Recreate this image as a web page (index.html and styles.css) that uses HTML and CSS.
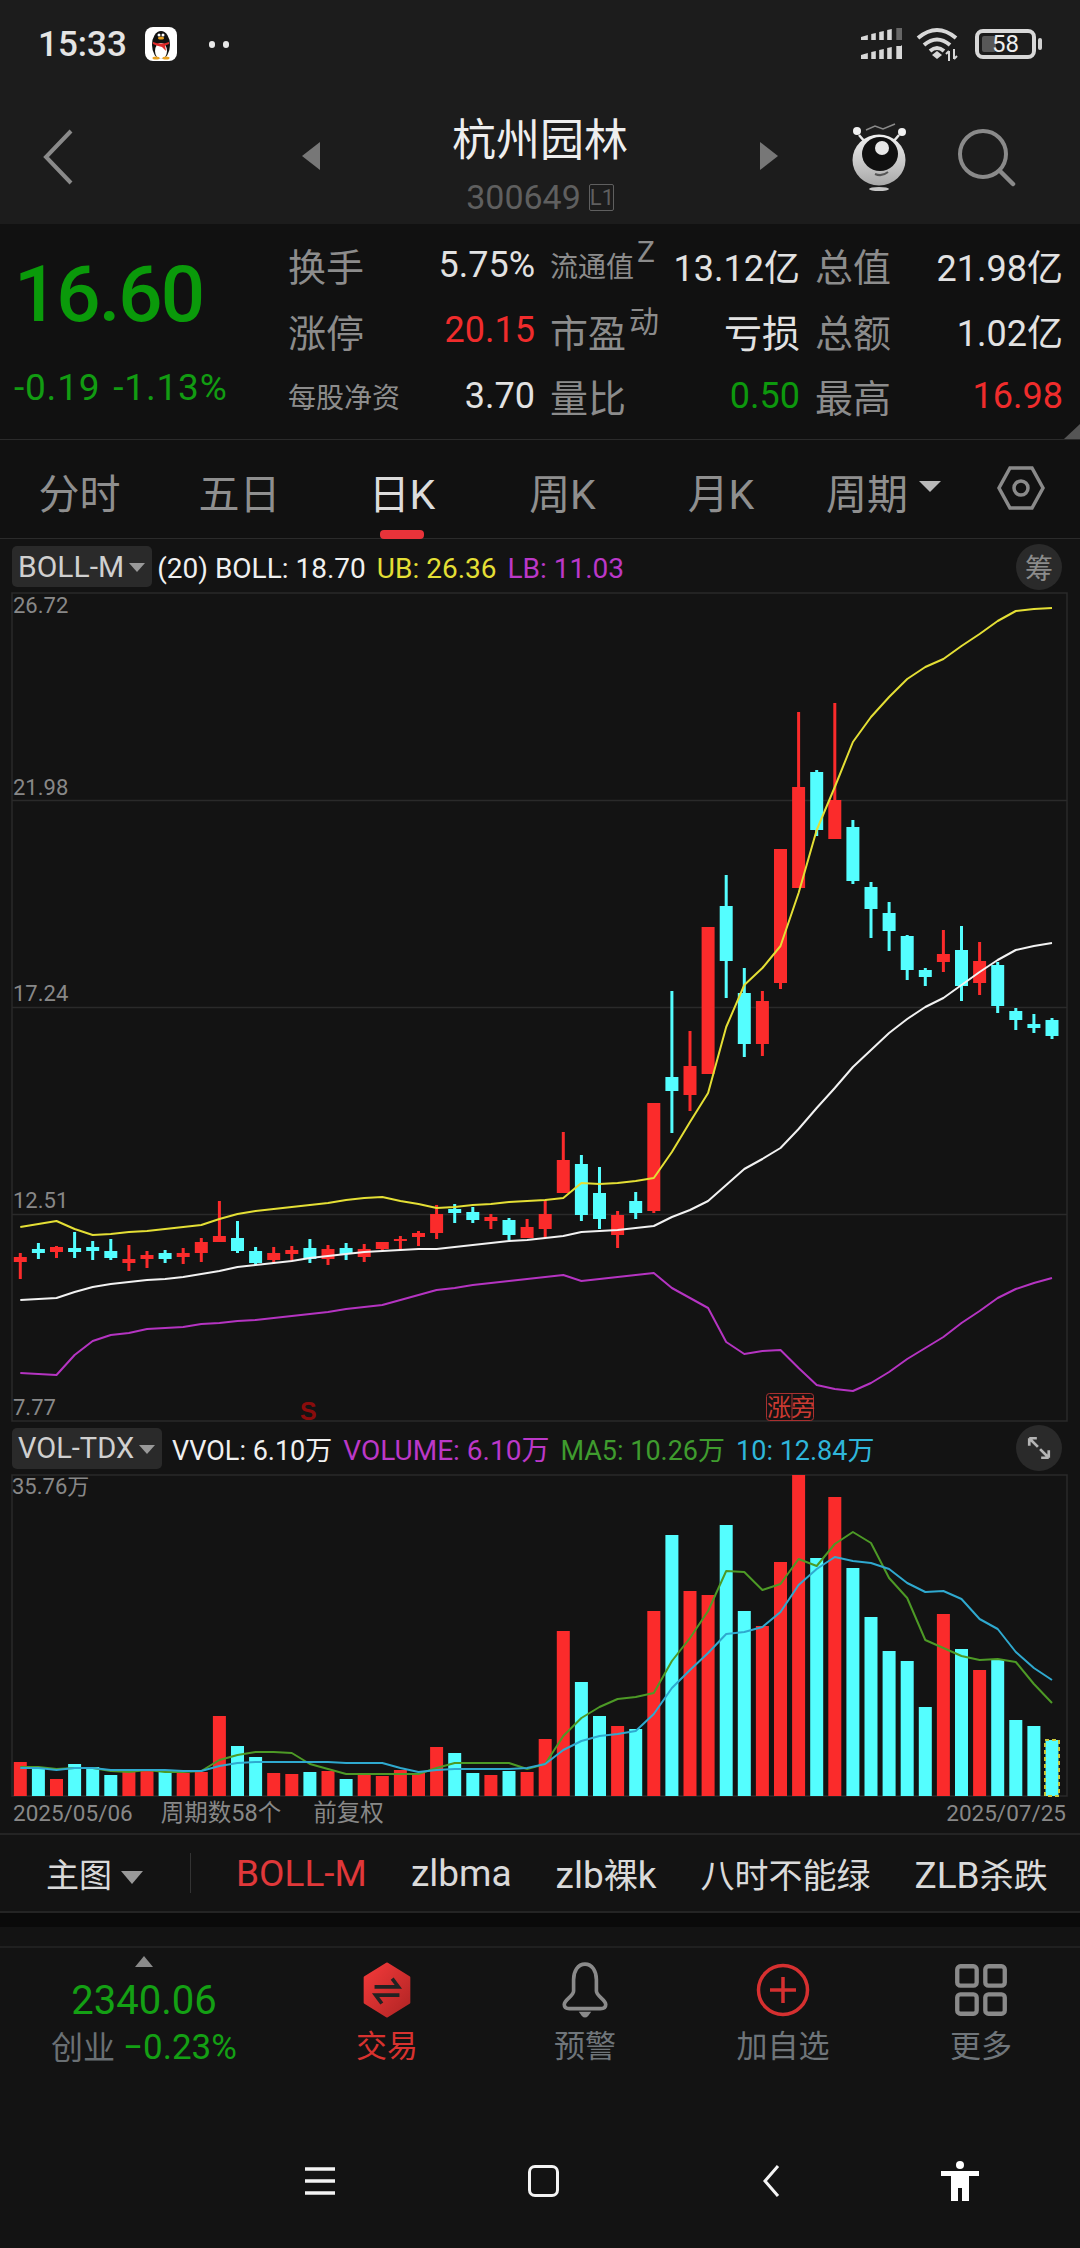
FILE: index.html
```html
<!DOCTYPE html>
<html>
<head>
  <meta charset="utf-8">
  <title>杭州园林</title>
  <link rel="stylesheet" href="styles.css">
</head>

<body>
  <div class="status-bar">
    <span class="clock">15:33</span>
    <svg class="qq-icon" viewBox="0 0 32 34">
      <rect width="32" height="34" rx="8" fill="#fff"/>
      <ellipse cx="16" cy="18" rx="9" ry="14" fill="#111"/>
      <ellipse cx="16" cy="24" rx="6" ry="8" fill="#fff"/>
      <ellipse cx="16" cy="11" rx="3" ry="1.6" fill="#e8a020"/>
      <path d="M8 15 Q16 18 24 15 V17 L20 18.500 L21 24 L17 20 Q12 19 8 17Z" fill="#e02a2a"/>
      <circle cx="14" cy="8" r="1.500" fill="#fff"/>
      <circle cx="18" cy="8" r="1.500" fill="#fff"/>
      <ellipse cx="11" cy="31" rx="3.500" ry="1.500" fill="#e8a020"/>
      <ellipse cx="21" cy="31" rx="3.500" ry="1.500" fill="#e8a020"/>
    </svg>
    <span class="dots"><i></i><i></i></span>
    <div class="status-right">
      <svg class="signal" viewBox="0 0 36 32" preserveAspectRatio="none">
        <g fill="#d8d8d8">
          <path d="M0 9 L6 7 V12 H0Z M9 6 L13 5 V12 H9Z M16 4 L20 3 V12 H16Z M23 2 L27 1 V12 H23Z"/>
          <path d="M0 27 L6 25 V31 H0Z M9 24 L13 23 V31 H9Z M16 22 L20 21 V31 H16Z M23 20 L27 19 V31 H23Z M31 18 H35 L36 17 V31 H31Z"/>
        </g>
        <rect x="31" y="0" width="5" height="12" fill="#666"/>
      </svg>
      <svg class="wifi" viewBox="0 0 46 34">
        <g fill="none" stroke="#d8d8d8" stroke-width="4">
          <path d="M2 11 Q21 -5 40 11"/>
          <path d="M8 18 Q21 7 34 18"/>
          <path d="M14 24 Q21 18 28 24"/>
        </g>
        <path d="M16 28 L21 24 L26 28 L21 32Z" fill="#d8d8d8"/>
        <path d="M33 34 V24 M30 27 L33 24 M38 22 V32 M38 32 L41 29" stroke="#d8d8d8" stroke-width="2" fill="none"/>
      </svg>
      <div class="battery">
        <span class="battery-fill"></span>
        <span class="battery-num">58</span>
      </div>
      <span class="battery-tip"></span>
    </div>
  </div>

  <header class="top-bar">
    <svg class="back-icon" viewBox="0 0 30 56">
      <path d="M28 2 L3 28 L28 54" fill="none" stroke="#8a8a8a" stroke-width="4"/>
    </svg>
    <span class="tri-left"></span>
    <div class="stock-name">
      <div class="stock-title">杭州园林</div>
      <div class="stock-code">300649<span class="level-tag">L1</span></div>
    </div>
    <span class="tri-right"></span>
    <svg class="mascot" viewBox="0 0 58 72">
      <defs>
        <linearGradient id="mascotFill" x1="0" y1="0" x2="0" y2="1">
          <stop offset="0" stop-color="#f0f0f0"/>
          <stop offset="1" stop-color="#a8a8a8"/>
        </linearGradient>
      </defs>
      <path d="M9 16 L15 23 M49 16 L43 23" stroke="#e8e8e8" stroke-width="2.500"/>
      <circle cx="7" cy="12" r="4" fill="#f0f0f0"/>
      <circle cx="52" cy="13" r="4" fill="#f0f0f0"/>
      <path d="M16 11 L25 7 L33 10 L45 5" stroke="#8a8a8a" stroke-width="1.500" fill="none"/>
      <ellipse cx="29" cy="41" rx="26.500" ry="25.500" fill="url(#mascotFill)"/>
      <ellipse cx="30" cy="35" rx="18" ry="17" fill="#101010"/>
      <circle cx="32" cy="29" r="7" fill="#e8e8e8"/>
      <path d="M25 55 Q32 58 38 53" stroke="#555" stroke-width="2" fill="none"/>
      <ellipse cx="29" cy="70" rx="10" ry="2" fill="#c4c4c4"/>
    </svg>
    <svg class="search-icon" viewBox="0 0 58 58">
      <circle cx="25" cy="25" r="23" fill="none" stroke="#8a8a8a" stroke-width="4"/>
      <path d="M42 42 L55 55" stroke="#8a8a8a" stroke-width="4.500" stroke-linecap="round"/>
    </svg>
  </header>

  <section class="quote">
    <div class="quote-main">
      <div class="price">16.60</div>
      <div class="change">-0.19 -1.13%</div>
    </div>
    <div class="quote-grid">
      <div class="cell"><span class="lbl">换手</span><span class="val">5.75%</span></div>
      <div class="cell"><span class="lbl small">流通值<sup class="sup">Z</sup></span><span class="val">13.12亿</span></div>
      <div class="cell"><span class="lbl">总值</span><span class="val">21.98亿</span></div>
      <div class="cell"><span class="lbl">涨停</span><span class="val red">20.15</span></div>
      <div class="cell"><span class="lbl">市盈<sup class="sup">动</sup></span><span class="val cn">亏损</span></div>
      <div class="cell"><span class="lbl">总额</span><span class="val">1.02亿</span></div>
      <div class="cell"><span class="lbl small">每股净资</span><span class="val">3.70</span></div>
      <div class="cell"><span class="lbl">量比</span><span class="val green">0.50</span></div>
      <div class="cell"><span class="lbl">最高</span><span class="val red">16.98</span></div>
    </div>
    <span class="corner"></span>
  </section>

  <nav class="period-tabs">
    <span class="tab">分时</span>
    <span class="tab">五日</span>
    <span class="tab active">日K</span>
    <span class="tab">周K</span>
    <span class="tab">月K</span>
    <span class="tab">周期<i class="caret"></i></span>
    <svg class="hex-icon" viewBox="0 0 48 44">
      <path d="M13 2 H35 L46 22 L35 42 H13 L2 22Z" fill="none" stroke="#8a8a8a" stroke-width="3.500"/>
      <circle cx="24" cy="22" r="7" fill="none" stroke="#8a8a8a" stroke-width="3.500"/>
    </svg>
  </nav>

  <div class="legend">
    <span class="chip">BOLL-M<i class="chip-caret"></i></span>
    <span class="leg white">(20) BOLL: 18.70</span>
    <span class="leg yellow">UB: 26.36</span>
    <span class="leg purple">LB: 11.03</span>
    <span class="round-btn">筹</span>
  </div>

  <svg id="kline" class="chart kline-chart" viewBox="0 592 1080 830">
    <g class="grid">
      <rect x="12" y="593" width="1055" height="828"/>
      <path d="M12 800.500 H1067 M12 1007.500 H1067 M12 1214.500 H1067"/>
    </g>
    <text class="axis" x="13" y="613">26.72</text>
    <text class="axis" x="13" y="795">21.98</text>
    <text class="axis" x="13" y="1001">17.24</text>
    <text class="axis" x="13" y="1208">12.51</text>
    <text class="axis" x="13" y="1415">7.77</text>
    <text class="mark-s" x="300" y="1420">S</text>
    <g id="candles"></g>
    <g id="bollLines"></g>
    <rect class="tag-box" x="766.500" y="1393.500" width="47" height="27" rx="3"/>
    <path class="tag-box" d="M792 1393.500 V1420.500"/>
    <text class="tag-text" x="767" y="1416">涨</text>
    <text class="tag-text" x="791" y="1416">旁</text>
  </svg>

  <div class="legend legend-vol">
    <span class="chip">VOL-TDX<i class="chip-caret"></i></span>
    <span class="leg white">VVOL: 6.10万</span>
    <span class="leg purple">VOLUME: 6.10万</span>
    <span class="leg ma5">MA5: 10.26万</span>
    <span class="leg ma10">10: 12.84万</span>
    <span class="round-btn">
      <svg class="expand-icon" viewBox="0 0 24 24">
        <path d="M3 3 L11 11 M3 3 H10 M3 3 V10 M21 21 L13 13 M21 21 H14 M21 21 V14" fill="none" stroke="#b4b4b4" stroke-width="2.500"/>
      </svg>
    </span>
  </div>

  <svg id="volume" class="chart vol-chart" viewBox="0 1473 1080 323">
    <g class="grid">
      <rect x="12" y="1474" width="1055" height="321"/>
    </g>
    <text class="axis" x="12" y="1493">35.76万</text>
    <g id="volBars"></g>
    <g id="volLines"></g>
  </svg>

  <div class="date-row">
    <span>2025/05/06</span>
    <span class="date-cn">周期数58个</span>
    <span class="date-cn date-adj">前复权</span>
    <span class="date-last">2025/07/25</span>
  </div>

  <div class="indicator-row">
    <span class="main-pick">主图<i class="pick-caret"></i></span>
    <span class="divider"></span>
    <span class="ind active"><span class="lat">BOLL-M</span></span>
    <span class="ind"><span class="lat">zlbma</span></span>
    <span class="ind"><span class="lat">zlb</span>裸<span class="lat">k</span></span>
    <span class="ind">八时不能绿</span>
    <span class="ind"><span class="lat">ZLB</span>杀跌</span>
  </div>

  <div class="dark-strip"></div>
  <div class="pad-strip"></div>

  <nav class="bottom-nav">
    <div class="index-box">
      <span class="index-up"></span>
      <span class="index-num">2340.06</span>
      <span class="index-line">创业 <b>−0.23%</b></span>
    </div>
    <div class="nav-item on">
      <svg class="nav-icon" viewBox="0 0 50 54">
        <defs>
          <linearGradient id="hexFill" x1="0" y1="0" x2="1" y2="1">
            <stop offset="0" stop-color="#f43a3a"/>
            <stop offset="1" stop-color="#b02424"/>
          </linearGradient>
        </defs>
        <path d="M25 2 L46 15 V39 L25 52 L4 39 V15Z" fill="url(#hexFill)" stroke="url(#hexFill)" stroke-width="3" stroke-linejoin="round"/>
        <path d="M13 24 H36 L30 16 M37 32 H14 L20 40" fill="none" stroke="#222" stroke-width="3.500"/>
      </svg>
      <span>交易</span>
    </div>
    <div class="nav-item">
      <svg class="nav-icon" viewBox="0 0 50 54">
        <path d="M25 2 C18 2 14 9 14 17 V28 C14 33 5 36 5 41 C5 44 7 45 10 45 H40 C43 45 45 44 45 41 C45 36 36 33 36 28 V17 C36 9 32 2 25 2Z" fill="none" stroke="#8a8a8a" stroke-width="3.500"/>
        <path d="M19 48 H31 L28 52 Q25 55 22 52Z" fill="#8a8a8a"/>
      </svg>
      <span>预警</span>
    </div>
    <div class="nav-item">
      <svg class="nav-icon" viewBox="0 0 54 54">
        <circle cx="27" cy="27" r="24.500" fill="none" stroke="#d63030" stroke-width="3.500"/>
        <path d="M27 14 V40 M14 27 H40" stroke="#d63030" stroke-width="3.500"/>
      </svg>
      <span>加自选</span>
    </div>
    <div class="nav-item">
      <svg class="nav-icon" viewBox="0 0 50 50">
        <g fill="none" stroke="#8a8a8a" stroke-width="4">
          <rect x="3" y="3" width="18" height="18" rx="3"/>
          <rect x="29" y="3" width="18" height="18" rx="3"/>
          <rect x="3" y="29" width="18" height="18" rx="3"/>
          <rect x="29" y="29" width="18" height="18" rx="3"/>
        </g>
      </svg>
      <span>更多</span>
    </div>
  </nav>

  <div class="system-nav">
    <svg class="sys-menu" viewBox="0 0 30 28">
      <path d="M0 2 H30 M0 14 H30 M0 26 H30" stroke="#f4f4f4" stroke-width="3.500"/>
    </svg>
    <span class="sys-home"></span>
    <svg class="sys-back" viewBox="0 0 18 32">
      <path d="M16 1 L3 16 L16 31" fill="none" stroke="#f4f4f4" stroke-width="3"/>
    </svg>
    <svg class="sys-person" viewBox="0 0 38 40">
      <circle cx="19" cy="4" r="4" fill="#fff"/>
      <path d="M0 10 H38 V15 H28 V40 H21 V27 H17 V40 H10 V15 H0Z" fill="#fff"/>
    </svg>
  </div>

  <script src="chart.js"></script>
</body>

</html>
```

FILE: styles.css
```css
body {
  margin: 0;
  width: 1080px;
  height: 2248px;
  overflow: hidden;
  background: #131313;
  font-family: Roboto, "Noto Sans CJK SC", sans-serif;
  color: #ddd;
}

i {
  display: block;
}

/* status bar */
.status-bar {
  display: flex;
  align-items: center;
  height: 72px;
  padding: 16px 0 0 38px;
  box-sizing: border-box;
  background: #1c1c1c;
}

.clock {
  font-size: 35px;
  font-weight: 500;
  color: #e4e4e4;
  width: 107px;
}

.qq-icon {
  width: 32px;
  height: 34px;
}

.dots {
  display: flex;
  gap: 8px;
  margin-left: 32px;
}

.dots i {
  width: 6px;
  height: 7px;
  border-radius: 3px;
  background: #e8e8e8;
}

.status-right {
  display: flex;
  align-items: center;
  margin-left: auto;
  padding-right: 38px;
}

.signal {
  width: 41px;
  height: 32px;
  margin-right: 14px;
}

.wifi {
  width: 46px;
  height: 34px;
  margin-right: 13px;
}

.battery {
  display: flex;
  align-items: center;
  justify-content: center;
  position: relative;
  width: 61px;
  height: 30px;
  box-sizing: border-box;
  border: 4px solid #d8d8d8;
  border-radius: 8px;
}

.battery-fill {
  position: absolute;
  left: 3px;
  top: 3px;
  bottom: 3px;
  width: 14px;
  border-radius: 2px;
  background: #585858;
}

.battery-num {
  position: relative;
  font-size: 24px;
  color: #eee;
}

.battery-tip {
  width: 4px;
  height: 12px;
  margin-left: 2px;
  border-radius: 2px;
  background: #d0d0d0;
}

/* title bar */
.top-bar {
  display: grid;
  grid-template-columns: 302px 18px 440px 18px 72px 58px 50px 58px 64px;
  align-items: start;
  height: 152px;
  background: #1c1c1c;
}

.back-icon {
  width: 30px;
  height: 56px;
  margin: 57px 0 0 43px;
}

.tri-left, .tri-right {
  width: 0;
  height: 0;
  margin-top: 70px;
  border-top: 14px solid transparent;
  border-bottom: 14px solid transparent;
}

.tri-left {
  border-right: 18px solid #777;
}

.tri-right {
  border-left: 18px solid #777;
}

.stock-name {
  display: flex;
  flex-direction: column;
  align-items: center;
  padding-top: 43px;
}

.stock-title {
  font-size: 44px;
  line-height: 52px;
  color: #eee;
}

.stock-code {
  display: flex;
  align-items: center;
  margin-top: 14px;
  height: 32px;
  font-size: 34px;
  color: #5f5f5f;
}

.level-tag {
  width: 25px;
  height: 27px;
  margin-left: 8px;
  box-sizing: border-box;
  border: 1px solid #5f5f5f;
  border-radius: 2px;
  font-size: 22px;
  line-height: 25px;
  text-align: center;
}

.mascot {
  grid-column: 6;
  width: 58px;
  height: 72px;
  margin-top: 47px;
}

.search-icon {
  grid-column: 8;
  width: 58px;
  height: 58px;
  margin-top: 57px;
}

/* quote block */
.quote {
  display: flex;
  position: relative;
  height: 216px;
  box-sizing: border-box;
  background: #111;
  border-bottom: 1px solid #2b2b2b;
}

.quote-main {
  width: 288px;
  padding: 26px 0 0 14px;
  box-sizing: border-box;
}

.price {
  font-size: 78px;
  line-height: 90px;
  font-weight: 500;
  letter-spacing: -2px;
  color: #0a9a0a;
}

.change {
  margin-top: 28px;
  font-size: 37px;
  line-height: 40px;
  letter-spacing: 0.800px;
  word-spacing: 3px;
  color: #129c12;
  white-space: nowrap;
}

.quote-grid {
  display: grid;
  grid-template-columns: 247px 250px 248px;
  grid-auto-rows: 65.5px;
  column-gap: 15px;
  padding-top: 8px;
}

.cell {
  display: flex;
  justify-content: space-between;
  align-items: center;
}

.lbl {
  font-size: 38px;
  color: #8c8c8c;
  white-space: nowrap;
}

.lbl.small {
  font-size: 28px;
}

.sup {
  margin-left: 3px;
  font-size: 30px;
  line-height: 0;
  vertical-align: 15px;
}

.val {
  font-size: 36px;
  color: #e2e2e2;
}

.val.cn {
  font-size: 38px;
}

.red {
  color: #f02c2c;
}

.green {
  color: #0d980d;
}

.corner {
  position: absolute;
  right: 0;
  bottom: 0;
  width: 0;
  height: 0;
  border-left: 16px solid transparent;
  border-bottom: 15px solid #555;
}

/* period tabs */
.period-tabs {
  display: grid;
  grid-template-columns: 159px 161px 164px 157px 160px 165px 1fr;
  align-items: center;
  height: 99px;
  box-sizing: border-box;
  border-bottom: 1px solid #2b2b2b;
  padding-top: 3px;
  background: #111;
}

.tab {
  display: flex;
  justify-content: center;
  align-items: center;
  position: relative;
  font-size: 41px;
  color: #8f8f8f;
}

.tab.active {
  color: #dcdcdc;
}

.tab.active::after {
  content: "";
  position: absolute;
  left: 50%;
  bottom: -18px;
  width: 44px;
  height: 9px;
  margin-left: -22px;
  border-radius: 4px;
  background: #e8333a;
}

.caret {
  width: 0;
  height: 0;
  margin: -8px 0 0 11px;
  border-left: 11px solid transparent;
  border-right: 11px solid transparent;
  border-top: 11px solid #b8b8b8;
}

.hex-icon {
  justify-self: center;
  width: 48px;
  height: 44px;
  margin: -6px 4px 0 0;
}

/* legend rows */
.legend {
  display: flex;
  align-items: center;
  height: 53px;
  box-sizing: border-box;
  padding: 2px 0 0 12px;
  font-size: 28px;
}

.legend .leg {
  margin: 3px 0 0 5px;
  white-space: nowrap;
}

.legend .leg + .leg {
  margin-left: 11px;
}

.legend-vol {
  height: 52px;
  padding-top: 0;
  font-size: 27px;
}

.legend-vol .chip {
  font-size: 29px;
}

.legend-vol .leg {
  margin: 0 0 0 10px;
}

.legend-vol .leg + .leg {
  margin-left: 11px;
}

.legend-vol .purple {
  font-size: 28px;
}

.chip {
  display: flex;
  align-items: center;
  height: 41px;
  padding: 0 7px 0 6px;
  border-radius: 5px;
  background: #2a2a2a;
  color: #d0d0d0;
  font-size: 30px;
}

.chip-caret {
  width: 0;
  height: 0;
  margin: 2px 0 0 5px;
  border-left: 8px solid transparent;
  border-right: 8px solid transparent;
  border-top: 9px solid #999;
}

.white {
  color: #f0f0f0;
}

.yellow {
  color: #e4df35;
}

.purple {
  color: #bb38c8;
}

.ma5 {
  color: #3f9c2e;
}

.ma10 {
  color: #2fb6da;
}

.round-btn {
  display: flex;
  align-items: center;
  justify-content: center;
  width: 46px;
  height: 46px;
  margin: 0 18px 0 auto;
  border-radius: 50%;
  background: #2a2a2a;
  color: #8c8c8c;
  font-size: 28px;
}

.expand-icon {
  width: 26px;
  height: 26px;
}

/* charts */
.chart {
  display: block;
  width: 1080px;
}

.kline-chart {
  height: 830px;
  overflow: visible;
}

.vol-chart {
  height: 323px;
}

.grid rect, .grid path {
  fill: none;
  stroke: #2a2a2a;
  stroke-width: 1.500;
}

.axis {
  font-size: 22px;
  fill: #888;
}

.mark-s {
  font-size: 25px;
  font-weight: 700;
  fill: #8a0c0c;
  font-family: "Liberation Sans", sans-serif;
}

.tag-box {
  fill: none;
  stroke: #a83030;
}

.tag-text {
  font-size: 24px;
  fill: #cc3a32;
}

/* below the charts */
.date-row {
  display: flex;
  gap: 28px;
  height: 36px;
  padding: 0 14px 0 13px;
  font-size: 22.500px;
  line-height: 33px;
  color: #888;
  border-bottom: 2px solid #242424;
}

.date-cn {
  font-size: 23.500px;
}

.date-adj {
  margin-left: 4px;
}

.date-last {
  margin-left: auto;
}

.indicator-row {
  display: flex;
  align-items: center;
  height: 76px;
  padding-left: 46px;
  font-size: 33px;
  color: #dadada;
  border-bottom: 2px solid #242424;
}

.main-pick {
  display: flex;
  flex: none;
  align-items: center;
  white-space: nowrap;
}

.pick-caret {
  width: 0;
  height: 0;
  margin: 8px 0 0 9px;
  border-left: 11px solid transparent;
  border-right: 11px solid transparent;
  border-top: 13px solid #999;
}

.divider {
  flex: none;
  width: 1px;
  height: 40px;
  margin: 0 45px 0 47px;
  background: #333;
}

.ind {
  flex: none;
  margin-right: 44px;
  font-size: 34px;
  white-space: nowrap;
}

.lat {
  font-size: 37px;
}

.ind.active {
  color: #e0383a;
}

.dark-strip {
  height: 14px;
  background: #0a0a0a;
}

.pad-strip {
  height: 19px;
  border-bottom: 2px solid #202020;
}

/* bottom nav */
.bottom-nav {
  display: grid;
  grid-template-columns: 288px repeat(4, 198px);
  height: 130px;
}

.index-box {
  display: flex;
  flex-direction: column;
  align-items: center;
  position: relative;
  padding-top: 8px;
}

.index-up {
  width: 0;
  height: 0;
  border-left: 9px solid transparent;
  border-right: 9px solid transparent;
  border-bottom: 11px solid #8a8a8a;
}

.index-num {
  margin-top: 12px;
  font-size: 40px;
  line-height: 44px;
  color: #14a014;
}

.index-line {
  margin-top: 4px;
  font-size: 32px;
  line-height: 42px;
  color: #6a7074;
  white-space: nowrap;
}

.index-line b {
  font-weight: 400;
  font-size: 35px;
  color: #14a014;
}

.nav-item {
  display: flex;
  flex-direction: column;
  align-items: center;
  padding-top: 14px;
  font-size: 31px;
  line-height: 42px;
  color: #6f757a;
}

.nav-item.on {
  color: #d8322f;
}

.nav-icon {
  width: 54px;
  height: 56px;
  margin-bottom: 8px;
}

/* android nav */
.system-nav {
  display: flex;
  align-items: center;
  height: 100px;
  margin-top: 53px;
  padding-left: 305px;
}

.sys-menu {
  width: 30px;
  height: 28px;
}

.sys-home {
  width: 31px;
  height: 32px;
  margin-left: 193px;
  box-sizing: border-box;
  border: 3px solid #f4f4f4;
  border-radius: 7px;
}

.sys-back {
  width: 18px;
  height: 32px;
  margin-left: 203px;
}

.sys-person {
  width: 38px;
  height: 40px;
  margin-left: 161px;
}
```

FILE: chart.js
```js
const NS = 'http://www.w3.org/2000/svg';

// colour, wick top, body top, body bottom, wick bottom (page y)
const candles = [
  ['r',1253,1257,1262,1279],['c',1243,1249,1253,1259],['r',1246,1247,1252,1258],['c',1232,1248,1252,1258],
  ['c',1241,1247,1251,1260],['c',1239,1251,1258,1260],['r',1245,1259,1263,1271],['r',1251,1255,1259,1268],
  ['c',1250,1253,1259,1263],['r',1248,1253,1257,1264],['r',1238,1242,1253,1262],['r',1201,1236,1242,1242],
  ['c',1221,1238,1251,1253],['c',1247,1251,1263,1265],['r',1247,1253,1260,1263],['r',1246,1250,1254,1261],
  ['c',1239,1248,1259,1263],['r',1245,1249,1259,1265],['c',1243,1248,1254,1260],['r',1244,1249,1257,1262],
  ['r',1242,1242,1249,1250],['r',1236,1239,1241,1250],['r',1231,1233,1237,1246],['r',1205,1214,1233,1239],
  ['c',1204,1209,1213,1223],['c',1207,1212,1220,1223],['r',1214,1217,1221,1229],['c',1218,1220,1235,1240],
  ['r',1219,1227,1238,1238],['r',1200,1214,1229,1238],['r',1132,1160,1193,1193],['c',1155,1164,1215,1221],
  ['c',1167,1193,1219,1229],['r',1211,1215,1235,1248],['c',1192,1201,1213,1219],['r',1103,1103,1211,1213],
  ['c',991,1077,1091,1133],['r',1031,1066,1095,1111],['r',927,927,1074,1074],['c',875,906,961,998],
  ['c',968,993,1044,1057],['r',991,1001,1044,1056],['r',849,849,983,989],['r',712,787,888,888],
  ['c',770,772,830,836],['r',703,800,839,839],['c',820,827,881,884],['c',882,887,909,938],
  ['c',902,913,931,951],['c',935,936,970,980],['c',968,970,977,986],['r',930,954,962,972],
  ['c',926,950,986,1001],['r',942,961,983,995],['c',962,965,1006,1013],['c',1008,1011,1020,1030],
  ['c',1014,1024,1028,1033],['c',1018,1020,1036,1039]
];

const ub = [1227,1224,1221,1229,1235,1234,1232,1231,1229,1227,1225,1219,1214,1211,1209,1207,1205,1203,1200,1198,
  1197,1201,1204,1208,1207,1205,1204,1202,1201,1200,1198,1183,1184,1183,1181,1178,1152,1122,1093,1027,
  985,968,946,893,830,787,742,717,697,679,667,659,646,634,621,611,609,608];
const mid = [1300,1299,1298,1292,1287,1284,1282,1280,1279,1277,1274,1271,1267,1265,1263,1261,1258,1256,1254,1252,
  1251,1250,1249,1249,1247,1245,1243,1241,1240,1238,1236,1232,1231,1230,1228,1226,1217,1210,1201,1185,
  1169,1159,1148,1129,1108,1088,1067,1050,1033,1019,1007,998,985,972,960,950,946,943];
const lb = [1373,1374,1375,1355,1341,1335,1333,1329,1328,1327,1324,1323,1321,1320,1318,1316,1314,1312,1309,1307,
  1305,1300,1295,1290,1288,1285,1283,1281,1279,1277,1275,1281,1279,1277,1275,1273,1288,1298,1308,1342,
  1354,1351,1350,1368,1385,1389,1391,1383,1372,1359,1348,1337,1323,1311,1298,1289,1283,1278];

const volTops = [1761,1768,1778,1763,1766,1774,1771,1770,1771,1772,1771,1715,1745,1756,1772,1773,1771,1770,1778,1772,
  1775,1769,1772,1746,1752,1772,1774,1770,1771,1738,1630,1681,1715,1725,1728,1610,1534,1590,1594,1524,
  1610,1625,1561,1474,1557,1496,1567,1616,1650,1660,1706,1613,1648,1669,1658,1719,1725,1739];
const ma5 = [1766,1766,1768,1767,1767,1770,1771,1769,1771,1771,1770,1759,1754,1751,1751,1752,1763,1768,1773,1773,
  1773,1773,1773,1767,1762,1762,1762,1762,1768,1763,1735,1717,1706,1698,1696,1692,1660,1637,1610,1570,
  1571,1589,1583,1558,1565,1543,1531,1542,1577,1597,1639,1647,1655,1659,1658,1661,1683,1702];
const ma10 = [1767,1767,1769,1767,1767,1769,1769,1769,1769,1770,1770,1765,1762,1761,1761,1761,1761,1761,1762,1762,
  1762,1767,1771,1769,1768,1768,1768,1768,1767,1763,1749,1740,1735,1733,1730,1713,1687,1669,1652,1633,
  1631,1626,1611,1584,1568,1556,1560,1562,1568,1582,1591,1590,1598,1618,1628,1651,1667,1679];

const RED = '#fb2b2b';
const CYAN = '#54feff';
const BASE = 1795;

function xAt(i) {
  return 20.3 + 18.1 * i;
}

function add(parent, tag, attrs) {
  const el = document.createElementNS(NS, tag);
  for (const key in attrs) {
    el.setAttribute(key, attrs[key]);
  }
  parent.appendChild(el);
  return el;
}

function drawLine(parent, values, colour, width) {
  const pts = values.map((y, i) => xAt(i).toFixed(1) + ',' + y).join(' ');
  add(parent, 'polyline', { points: pts, fill: 'none', stroke: colour, 'stroke-width': width, 'stroke-linejoin': 'round' });
}

const candleGroup = document.querySelector('#candles');
candles.forEach((c, i) => {
  const colour = c[0] === 'r' ? RED : CYAN;
  const x = xAt(i);
  add(candleGroup, 'rect', { x: x - 1.5, y: c[1], width: 3, height: c[4] - c[1], fill: colour });
  add(candleGroup, 'rect', { x: x - 6.5, y: c[2], width: 13, height: c[3] - c[2], fill: colour });
});

const bollGroup = document.querySelector('#bollLines');
drawLine(bollGroup, ub, '#e4df35', 2);
drawLine(bollGroup, mid, '#f2f2f2', 2);
drawLine(bollGroup, lb, '#b534c2', 2);

const volGroup = document.querySelector('#volBars');
volTops.forEach((top, i) => {
  const colour = candles[i][0] === 'r' ? RED : CYAN;
  add(volGroup, 'rect', { x: xAt(i) - 6.5, y: top, width: 13, height: BASE - top, fill: colour });
});
// last bar still trading, dashed outline
add(volGroup, 'rect', {
  x: xAt(57) - 7, y: 1739, width: 14, height: 56,
  fill: 'none', stroke: '#c8c83a', 'stroke-width': 2, 'stroke-dasharray': '4 3'
});

const volLines = document.querySelector('#volLines');
drawLine(volLines, ma5, '#4d9a26', 2);
drawLine(volLines, ma10, '#2fa9cf', 2);
```
